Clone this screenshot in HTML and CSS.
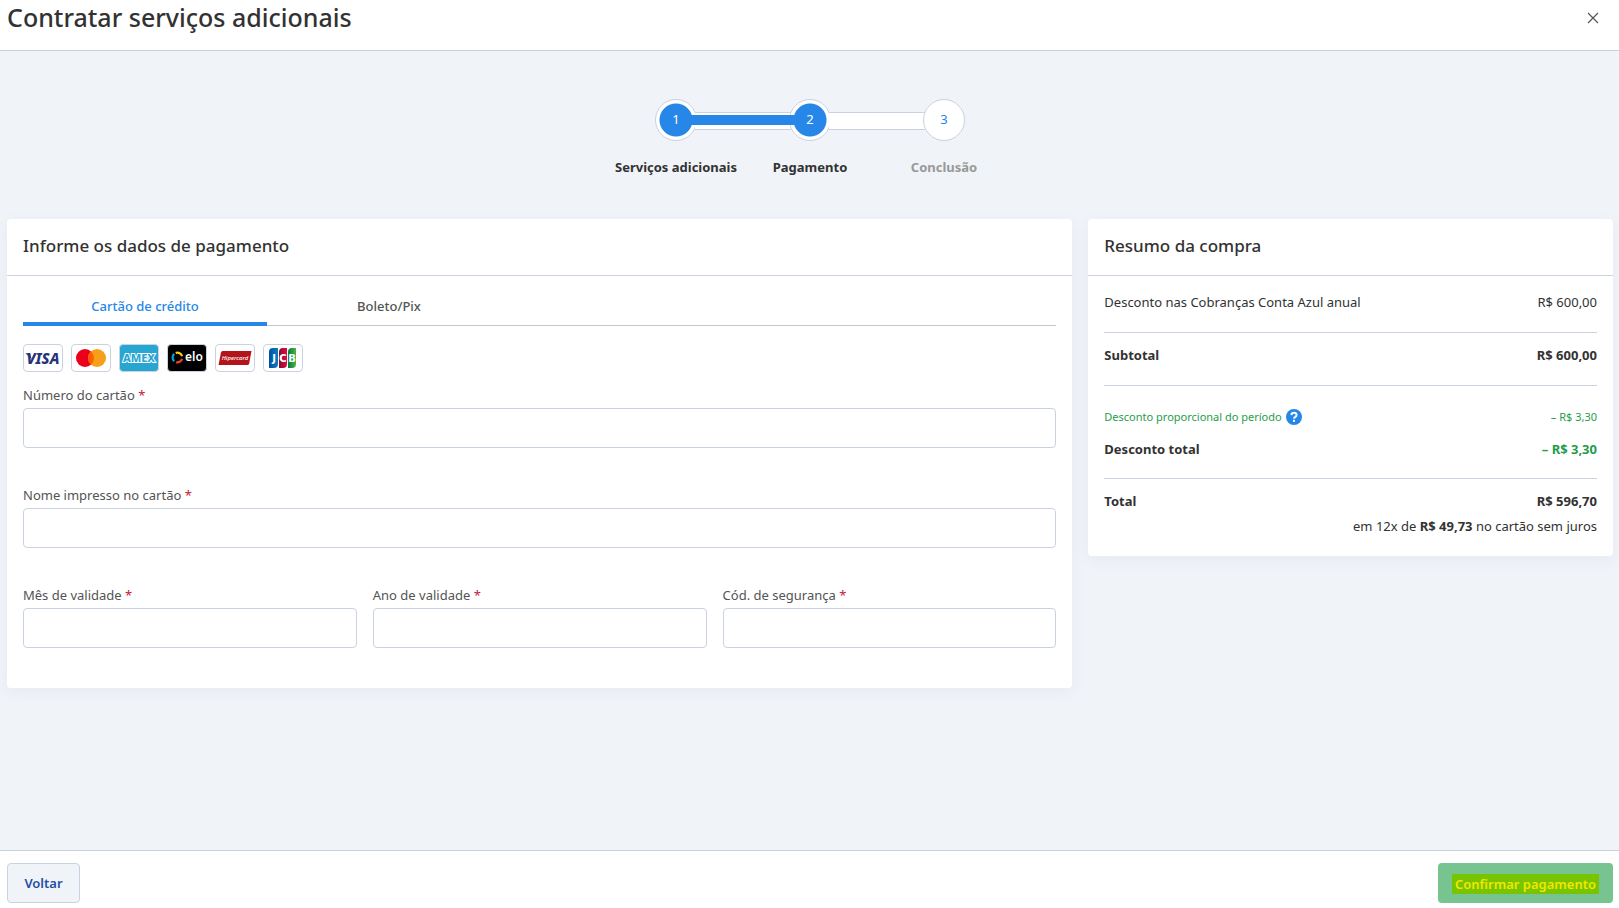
FILE: index.html
```html
<!DOCTYPE html>
<html lang="pt-BR">
<head>
  <meta charset="UTF-8">
  <meta name="viewport" content="width=device-width, initial-scale=1.0">
  <title>Contratar serviços adicionais</title>
  <link rel="stylesheet" href="styles.css">
</head>
<body>

  <header class="header">
    <h1>Contratar serviços adicionais</h1>
    <button class="close-btn" type="button" aria-label="Fechar">
      <svg width="12" height="12" viewBox="0 0 12 12"><path d="M1 1l10 10M11 1L1 11" stroke="#545454" stroke-width="1.2" fill="none"/></svg>
    </button>
  </header>

  <main class="content">
    <ol class="steps">
      <li class="step done">
        <span class="step-circle">1</span>
        <span class="step-label">Serviços adicionais</span>
      </li>
      <li class="step active">
        <span class="step-circle">2</span>
        <span class="step-label">Pagamento</span>
      </li>
      <li class="step">
        <span class="step-circle">3</span>
        <span class="step-label">Conclusão</span>
      </li>
    </ol>

    <div class="columns">
      <section class="card payment">
        <h2 class="card-title">Informe os dados de pagamento</h2>
        <form class="card-body" id="payment-form">
          <div class="tabs" role="tablist">
            <button class="tab selected" type="button" role="tab" aria-selected="true">Cartão de crédito</button>
            <button class="tab" type="button" role="tab" aria-selected="false">Boleto/Pix</button>
          </div>

          <!-- Bandeiras aceitas -->
          <div class="brands">
            <svg class="brand" viewBox="0 0 40 28">
              <rect x=".5" y=".5" width="39" height="27" rx="3.5" fill="#fff" stroke="#c9d3df"/>
              <text x="20" y="20" text-anchor="middle" font-size="15" font-weight="800" font-style="italic" fill="#26337a">VISA</text>
              <path d="M2.5 9.2h4.500l1.600 6z" fill="#26337a"/>
            </svg>
            <svg class="brand" viewBox="0 0 40 28">
              <rect x=".5" y=".5" width="39" height="27" rx="3.5" fill="#fff" stroke="#c9d3df"/>
              <circle cx="14" cy="14" r="9" fill="#eb001b"/>
              <circle cx="26" cy="14" r="9" fill="#f79e1b"/>
              <path d="M20 7.300a9 9 0 0 1 0 13.400a9 9 0 0 1 0-13.400z" fill="#ff5f00"/>
            </svg>
            <svg class="brand" viewBox="0 0 40 28">
              <rect x=".5" y=".5" width="39" height="27" rx="3.5" fill="#28a6d2" stroke="#c9d3df"/>
              <text x="20" y="18" text-anchor="middle" font-size="11" font-weight="800" fill="#28a6d2" stroke="#fff" stroke-width="2" paint-order="stroke">AMEX</text>
            </svg>
            <svg class="brand" viewBox="0 0 40 28">
              <rect x=".5" y=".5" width="39" height="27" rx="3.5" fill="#000" stroke="#c9d3df"/>
              <g fill="none" stroke-width="2.2">
                <path d="M7.300 9.800a4.800 4.800 0 0 0 0 7.400" stroke="#00a4e0"/>
                <path d="M8.700 9a4.800 4.800 0 0 1 6.400 3.300" stroke="#ffcb05"/>
                <path d="M15.100 14.900a4.800 4.800 0 0 1-6 3.300" stroke="#ef4123"/>
              </g>
              <text x="27" y="17" text-anchor="middle" font-size="12" font-weight="600" fill="#fff">elo</text>
            </svg>
            <svg class="brand" viewBox="0 0 40 28">
              <rect x=".5" y=".5" width="39" height="27" rx="3.5" fill="#fff" stroke="#c9d3df"/>
              <path d="M7.500 7H36.500l-2.300 12.500q-.4 1.500-2 1.500H3.500L6 8.500Q6.400 7 7.500 7z" fill="#b3131b"/>
              <text x="20" y="16" text-anchor="middle" font-size="6" font-style="italic" font-weight="500" fill="#fff">Hipercard</text>
            </svg>
            <svg class="brand" viewBox="0 0 40 28">
              <defs>
                <linearGradient id="jcb-blue"><stop offset="0" stop-color="#00529c"/><stop offset="1" stop-color="#0a7ec4"/></linearGradient>
                <linearGradient id="jcb-red"><stop offset="0" stop-color="#7b1238"/><stop offset="1" stop-color="#e4093a"/></linearGradient>
                <linearGradient id="jcb-green"><stop offset="0" stop-color="#007a3d"/><stop offset="1" stop-color="#50b447"/></linearGradient>
              </defs>
              <rect x=".5" y=".5" width="39" height="27" rx="3.5" fill="#fff" stroke="#c9d3df"/>
              <path d="M10 4h5v16q0 4-4 4H6V8q0-4 4-4z" fill="url(#jcb-blue)"/>
              <path d="M20 4h4v16q0 4-4 4h-4V8q0-4 4-4z" fill="url(#jcb-red)"/>
              <path d="M29 4h4v16q0 4-4 4h-4V8q0-4 4-4z" fill="url(#jcb-green)"/>
              <g text-anchor="middle" font-family="DejaVu Sans" font-size="10" font-weight="700" fill="#fff">
                <text x="11" y="18">J</text>
                <text x="20" y="18">C</text>
                <text x="29" y="18">B</text>
              </g>
            </svg>
          </div>

          <div class="field">
            <label for="card-number">Número do cartão <span class="required">*</span></label>
            <input type="text" id="card-number">
          </div>
          <div class="field">
            <label for="card-name">Nome impresso no cartão <span class="required">*</span></label>
            <input type="text" id="card-name">
          </div>
          <div class="field-row">
            <div class="field">
              <label for="card-month">Mês de validade <span class="required">*</span></label>
              <input type="text" id="card-month">
            </div>
            <div class="field">
              <label for="card-year">Ano de validade <span class="required">*</span></label>
              <input type="text" id="card-year">
            </div>
            <div class="field">
              <label for="card-code">Cód. de segurança <span class="required">*</span></label>
              <input type="text" id="card-code">
            </div>
          </div>
        </form>
      </section>

      <section class="card summary">
        <h2 class="card-title">Resumo da compra</h2>
        <div class="summary-body">
          <div class="summary-group">
            <div class="line"><span>Desconto nas Cobranças Conta Azul anual</span><span>R$ 600,00</span></div>
          </div>
          <div class="summary-group">
            <div class="line"><strong>Subtotal</strong><strong>R$ 600,00</strong></div>
          </div>
          <div class="summary-group discounts">
            <div class="line small">
              <span class="with-help">Desconto proporcional do período
                <svg width="16" height="16" viewBox="0 0 16 16"><circle cx="8" cy="8" r="8" fill="#2687e9"/><path d="M5.400 6.200q.2-2.400 2.600-2.400t2.600 2.100q0 1.200-1.200 1.900T8 9.600" fill="none" stroke="#fff" stroke-width="2"/><rect x="7" y="10.800" width="2" height="2" fill="#fff"/></svg>
              </span>
              <span>– R$ 3,30</span>
            </div>
            <div class="line"><strong>Desconto total</strong><strong class="green">– R$ 3,30</strong></div>
          </div>
          <div class="summary-group">
            <div class="line"><strong>Total</strong><strong>R$ 596,70</strong></div>
            <p class="installments">em 12x de <strong>R$ 49,73</strong> no cartão sem juros</p>
          </div>
        </div>
      </section>
    </div>
  </main>

  <footer class="footer">
    <button class="btn btn-back" type="button">Voltar</button>
    <button class="btn btn-confirm" type="submit" form="payment-form"><mark>Confirmar pagamento</mark></button>
  </footer>

</body>
</html>
```
FILE: styles.css
```css
* {
  box-sizing: border-box;
}

body {
  margin: 0;
  min-height: 100vh;
  display: flex;
  flex-direction: column;
  font-family: "Noto Sans", "Open Sans", sans-serif;
  font-size: 13px;
  line-height: 20px;
  color: #323232;
  background: #f0f3f8;
}

h1, h2, p, ol {
  margin: 0;
  padding: 0;
}

button {
  font-family: inherit;
  cursor: pointer;
}

.header {
  display: flex;
  justify-content: space-between;
  align-items: flex-start;
  height: 51px;
  padding: 0 20px 0 7px;
  background: #fff;
  border-bottom: 1px solid #c9d3df;
}

.header h1 {
  font-size: 25px;
  font-weight: 500;
  line-height: 34px;
}

.close-btn {
  display: flex;
  padding: 12px 0;
  border: none;
  background: none;
}

.content {
  flex: 1;
  padding: 48px 6px 48px 7px;
}

/* Etapas */
.steps {
  display: flex;
  justify-content: center;
  list-style: none;
}

.step {
  position: relative;
  width: 134px;
  display: flex;
  flex-direction: column;
  align-items: center;
  color: #999;
}

.step-circle {
  position: relative;
  width: 42px;
  height: 42px;
  border: 1px solid #c9d3df;
  border-radius: 50%;
  background: #fff;
  color: #2687e9;
  line-height: 38px;
  text-align: center;
}

.step-label {
  margin-top: 16px;
  font-weight: 700;
  white-space: nowrap;
}

.done, .active {
  color: #323232;
}

.done .step-circle, .active .step-circle {
  background: radial-gradient(circle, #2687e9 16px, #fff 17px);
  color: #fff;
}

/* Trilho entre as etapas */
.step:not(:last-child)::before {
  content: "";
  position: absolute;
  z-index: 1;
  top: 13px;
  left: calc(50% + 19px);
  width: 96px;
  height: 16px;
  border: 1px solid #c9d3df;
  border-width: 1px 0;
  background: #fff;
}

.step.active .step-circle {
  z-index: 2;
}

.step.active::before {
  z-index: 3;
}

.step:last-child .step-circle {
  z-index: 4;
}

.done::after {
  content: "";
  position: absolute;
  z-index: 3;
  top: 16px;
  left: calc(50% + 14px);
  width: 106px;
  height: 10px;
  background: #2687e9;
}

/* Cartões */
.columns {
  display: grid;
  grid-template-columns: repeat(3, 1fr);
  gap: 16px;
  align-items: start;
  margin-top: 42px;
}

.card {
  background: #fff;
  border-radius: 4px;
  box-shadow: 0 4px 16px rgba(50, 80, 120, 0.05);
}

.payment {
  grid-column: span 2;
}

.card-title {
  padding: 15px 16px 17px;
  border-bottom: 1px solid #c9d3df;
  font-size: 17px;
  font-weight: 500;
  line-height: 24px;
}

.card-body {
  padding: 10px 16px 40px;
}

.tabs {
  display: flex;
  border-bottom: 1px solid #c8c8c8;
}

.tab {
  width: 244px;
  height: 40px;
  margin-bottom: -1px;
  padding: 4px 0 0;
  border: none;
  border-bottom: 4px solid transparent;
  background: none;
  color: #545454;
  font-size: 13px;
  font-weight: 500;
}

.tab.selected {
  border-color: #2687e9;
  color: #2687e9;
}

.brands {
  display: flex;
  gap: 8px;
  margin: 18px 0 13px;
}

.brand {
  width: 40px;
  height: 28px;
}

.field {
  display: flex;
  flex-direction: column;
  gap: 3px;
  flex: 1;
}

.field + .field,
.field-row {
  margin-top: 37px;
}

.field-row {
  display: flex;
  gap: 16px;
}

.field-row .field {
  margin-top: 0;
}

.field label {
  color: #545454;
}

.field input {
  width: 100%;
  height: 40px;
  padding: 0 12px;
  border: 1px solid #c9d3df;
  border-radius: 4px;
  font: inherit;
}

.required {
  color: #c2183c;
}

/* Resumo */
.summary-body {
  padding: 0 16px;
}

.summary-group {
  padding: 16px 0 20px;
}

.summary-group + .summary-group {
  padding-top: 12px;
  border-top: 1px solid #c9d3df;
}

.line {
  display: flex;
  justify-content: space-between;
}

.summary-group + .discounts {
  padding-top: 21px;
  padding-bottom: 19px;
}

.small {
  margin-bottom: 12px;
  color: #1f9d4d;
  font-size: 11px;
}

.with-help {
  display: flex;
  align-items: center;
  gap: 4px;
}

.green {
  color: #1f9d4d;
}

.installments {
  margin-top: 5px;
  text-align: right;
}

/* Rodapé */
.footer {
  display: flex;
  justify-content: space-between;
  padding: 12px 6px 5px 7px;
  border-top: 1px solid #c9d3df;
  background: #fff;
}

.btn {
  height: 40px;
  padding: 0 16px;
  border: 1px solid #c9d3df;
  border-radius: 4px;
  font-size: 13px;
  font-weight: 600;
}

.btn-back {
  min-width: 73px;
  background: #f0f3f8;
  color: #1e4fa3;
}

.btn-confirm {
  padding: 2px 14px 0;
  border: none;
  background: #78c491;
}

.btn-confirm mark {
  display: block;
  padding: 0 3px;
  background: #78c400;
  color: #f0e800;
  line-height: 20px;
}
```
